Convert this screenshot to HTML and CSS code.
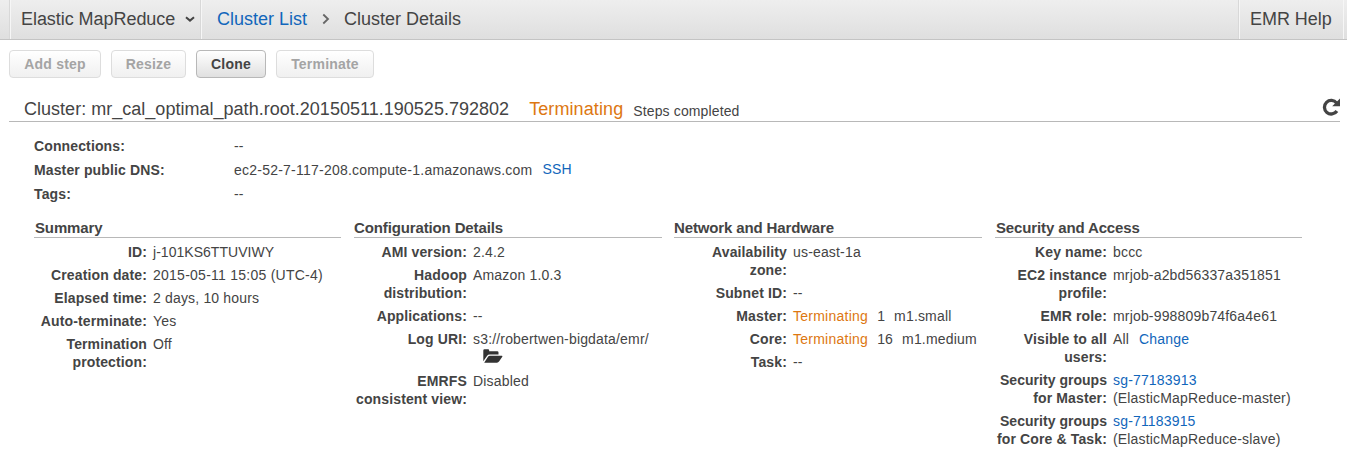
FILE: index.html
```html
<!DOCTYPE html>
<html lang="en">
<head>
<meta charset="utf-8">
<title>Cluster Details</title>
<link rel="stylesheet" href="styles.css">
</head>
<body>
<header class="topbar">
  <div class="service"><span class="t-service">Elastic MapReduce</span><svg class="caret" width="10" height="7" viewBox="0 0 10 7"><path d="M1 1.3 5 4.6 9 1.3" fill="none" stroke="#444" stroke-width="2"/></svg></div>
  <nav class="crumbs"><a class="link">Cluster List</a><svg class="chevron" width="8" height="12" viewBox="0 0 8 12"><path d="M1.3 1.5 6 6 1.3 10.5" fill="none" stroke="#666" stroke-width="1.8"/></svg><span class="t-details">Cluster Details</span></nav>
  <div class="help"><span>EMR Help</span></div>
</header>
<div class="actions">
  <button class="btn add" disabled>Add step</button>
  <button class="btn resize" disabled>Resize</button>
  <button class="btn clone">Clone</button>
  <button class="btn terminate" disabled>Terminate</button>
</div>
<div class="title">
  <span class="name">Cluster: mr_cal_optimal_path.root.20150511.190525.792802</span>
  <span class="state">Terminating</span>
  <span class="reason">Steps completed</span>
  <svg class="refresh" width="18" height="18" viewBox="0 0 18 18"><path d="M14.6 5A6.8 6.8 0 1 0 14.9 13" fill="none" stroke="#444" stroke-width="3.3"/><path d="M18 .6V8.2H10.2z" fill="#444"/></svg>
</div>
<dl class="basics">
  <dt>Connections:</dt><dd>--</dd>
  <dt>Master public DNS:</dt><dd><span class="dns">ec2-52-7-117-208.compute-1.amazonaws.com</span><a class="link ssh">SSH</a></dd>
  <dt>Tags:</dt><dd>--</dd>
</dl>
<main class="columns">
  <section class="summary">
    <h2>Summary</h2>
    <dl class="facts">
      <dt>ID:</dt><dd class="id">j-101KS6TTUVIWY</dd>
      <dt>Creation date:</dt><dd class="date">2015-05-11 15:05 (UTC-4)</dd>
      <dt>Elapsed time:</dt><dd>2 days, 10 hours</dd>
      <dt>Auto-terminate:</dt><dd>Yes</dd>
      <dt>Termination<br>protection:</dt><dd>Off</dd>
    </dl>
  </section>
  <section>
    <h2>Configuration Details</h2>
    <dl class="facts">
      <dt>AMI version:</dt><dd>2.4.2</dd>
      <dt>Hadoop<br>distribution:</dt><dd>Amazon 1.0.3</dd>
      <dt>Applications:</dt><dd>--</dd>
      <dt>Log URI:</dt><dd>s3://robertwen-bigdata/emr/<svg class="folder" width="20" height="14" viewBox="0 0 20 14"><path d="M.3 12.3V1.5Q.3.3 1.5.3H5q1.2 0 1.2 1.2v.7h8q1.3 0 1.3 1.3V5.6H6.6Q5 5.6 4 6.9z" fill="#333"/><path d="M1.2 13.7 5 7.8q.7-1 2-1H18.8q1 0 .5.9L16 12.6q-.7 1.1-2 1.1z" fill="#333"/></svg></dd>
      <dt>EMRFS<br>consistent view:</dt><dd>Disabled</dd>
    </dl>
  </section>
  <section>
    <h2>Network and Hardware</h2>
    <dl class="facts">
      <dt>Availability<br>zone:</dt><dd>us-east-1a</dd>
      <dt>Subnet ID:</dt><dd>--</dd>
      <dt>Master:</dt><dd class="nodes"><span class="warn">Terminating</span><span>1</span><span>m1.small</span></dd>
      <dt>Core:</dt><dd class="nodes"><span class="warn">Terminating</span><span>16</span><span>m1.medium</span></dd>
      <dt>Task:</dt><dd>--</dd>
    </dl>
  </section>
  <section class="security">
    <h2>Security and Access</h2>
    <dl class="facts">
      <dt>Key name:</dt><dd>bccc</dd>
      <dt>EC2 instance<br>profile:</dt><dd>mrjob-a2bd56337a351851</dd>
      <dt>EMR role:</dt><dd>mrjob-998809b74f6a4e61</dd>
      <dt>Visible to all<br>users:</dt><dd>All<a class="link change">Change</a></dd>
      <dt><span class="tight">Security groups</span><br>for Master:</dt><dd><a class="link">sg-77183913</a><br>(ElasticMapReduce-master)</dd>
      <dt><span class="tight">Security groups</span><br>for Core &amp; Task:</dt><dd><a class="link">sg-71183915</a><br>(ElasticMapReduce-slave)</dd>
    </dl>
  </section>
</main>
</body>
</html>
```
FILE: styles.css
```css
* { box-sizing: border-box; }
body { margin: 0; height: 461px; overflow: hidden; background: #fff; color: #444; font: 14px/18px "Liberation Sans", Arial, sans-serif; }
dl, dd, h2 { margin: 0; }
svg { display: block; flex: none; }
.link { color: #1166bb; text-decoration: none; }
.topbar { display: flex; height: 40px; padding: 0 3px 0 9px; border-bottom: 1px solid #c4c4c4; background: linear-gradient(#eee, #dfdfdf); font-size: 18px; line-height: 38px; white-space: nowrap; }
.service { display: flex; width: 193px; padding-left: 11px; border-left: 1px solid #d8d8d8; border-right: 1px solid #f6f6f6; box-shadow: inset 1px 0 #f6f6f6, inset -1px 0 #d8d8d8; }
.t-service { letter-spacing: -.05px; }
.caret { margin: 16px 0 0 10px; }
.crumbs { display: flex; flex: 1; padding-left: 15px; }
.chevron { margin: 13px 14px 0 15px; }
.help { width: 105px; padding-left: 10px; letter-spacing: -.05px; border-left: 1px solid #f6f6f6; border-right: 1px solid #f6f6f6; box-shadow: -1px 0 #d8d8d8; }
.actions { display: flex; gap: 10px; padding: 10px 9px 0; }
.btn { height: 28px; padding: 0; border: 1px solid #b8b8b8; border-radius: 4px; background: linear-gradient(#fff, #e0e0e0); color: #444; font: bold 14px/24px "Liberation Sans", Arial, sans-serif; letter-spacing: .2px; }
.btn:disabled { border-color: #ddd; background: linear-gradient(#fff, #f0f0f0); color: #a4a4a4; }
.add { width: 92px; }
.resize { width: 75px; }
.clone { width: 70px; }
.terminate { width: 98px; }
.title { display: flex; align-items: baseline; height: 29px; margin: 15px 7px 0 9px; padding: 4px 0 0 15px; border-bottom: 1px solid #b8b8b8; white-space: nowrap; }
.name, .state { font-size: 18px; line-height: 24px; letter-spacing: .02px; }
.state { margin-left: 20px; color: #dd7711; letter-spacing: .1px; }
.reason { position: relative; top: 1px; margin-left: 10px; letter-spacing: .13px; }
.refresh { align-self: flex-start; margin: 1px 0 0 auto; }
.basics { display: grid; grid-template-columns: 200px 1fr; grid-auto-rows: 24px; padding: 12px 34px 0; line-height: 25px; }
dt { font-weight: bold; letter-spacing: .13px; }
dd { letter-spacing: .17px; }
.tight { letter-spacing: .03px; }
.basics dd { display: flex; }
.dns { letter-spacing: .23px; }
.id { letter-spacing: .03px; }
.date { letter-spacing: .25px; }
.ssh { margin-left: 10px; line-height: 23px; }
.columns { display: grid; grid-template-columns: repeat(4, 308px); column-gap: 12px; padding: 12px 34px 0; }
.summary h2 { margin-right: 1px; padding-left: 1px; }
.security h2 { margin-left: 1px; padding-left: 1px; }
h2 { height: 20px; border-bottom: 1px solid #b8b8b8; font-size: 15px; line-height: 19px; letter-spacing: -.13px; }
.facts { display: grid; grid-template-columns: 113px 1fr; column-gap: 6px; row-gap: 5px; padding-top: 5px; white-space: nowrap; }
.facts dt { text-align: right; }
.folder { margin: 1px 0 4px 10px; }
.nodes { display: flex; gap: 9px; }
.warn { color: #dd7711; letter-spacing: .25px; }
.change { margin-left: 10px; }
```
